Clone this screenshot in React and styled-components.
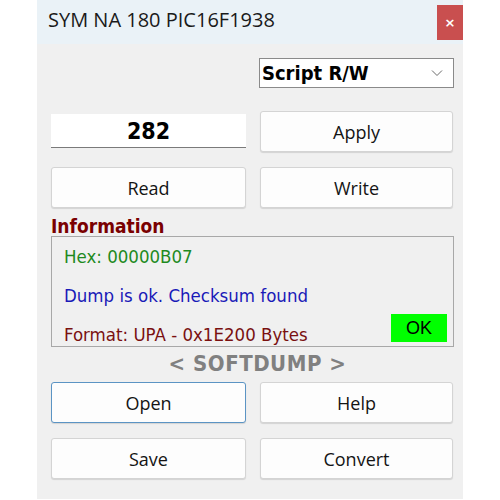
import React from "react";
import styled, { createGlobalStyle } from "styled-components";

const GlobalStyle = createGlobalStyle`
  html, body {
    margin: 0;
    padding: 0;
    background: #ffffff;
  }
  * {
    box-sizing: border-box;
  }
`;

const Window = styled.div`
  margin-left: 37px;
  width: 426px;
  height: 499px;
  display: flex;
  flex-direction: column;
  background: #f0f0f0;
`;

const TitleBar = styled.div`
  height: 44px;
  display: flex;
  align-items: flex-start;
  justify-content: space-between;
  background: #eaf2f7;
`;

const Title = styled.span`
  font-family: "Open Sans", "Noto Sans", sans-serif;
  font-size: 20px;
  color: #1a1a1a;
  padding-left: 11px;
  line-height: 40px;
`;

const CloseButton = styled.div`
  width: 26px;
  height: 35px;
  margin-top: 5px;
  background: #c94f4f;
  color: #ffffff;
  display: flex;
  align-items: center;
  justify-content: center;
  font-family: "DejaVu Sans", sans-serif;
  font-size: 13px;
  font-weight: bold;
`;

const Body = styled.div`
  flex: 1;
  padding: 14px 9px 0 14px;
  display: flex;
  flex-direction: column;
`;

const SelectRow = styled.div`
  display: flex;
  justify-content: flex-end;
`;

const Select = styled.div`
  width: 195px;
  height: 30px;
  border: 1px solid #8a8a8a;
  background: #ffffff;
  display: flex;
  align-items: center;
  justify-content: space-between;
  padding: 0 10px 0 2px;
  font-family: "DejaVu Sans Condensed", "DejaVu Sans", sans-serif;
  font-weight: bold;
  font-size: 20px;
  color: #000;
`;

const Grid = styled.div`
  display: grid;
  grid-template-columns: 195px 193px;
  column-gap: 14px;
  row-gap: 15px;
  margin-top: ${({ $top }) => $top}px;
`;

const Button = styled.div`
  height: 41px;
  display: flex;
  align-items: center;
  justify-content: center;
  background: #fdfdfd;
  border: 1px solid ${({ $focused }) => ($focused ? "#5b94c4" : "#d4d4d4")};
  border-radius: 3px;
  box-shadow: 0 1px 1px rgba(0, 0, 0, 0.12);
  font-family: "Open Sans", "Noto Sans", sans-serif;
  font-size: 18px;
  color: #141414;
`;

const NumberField = styled.div`
  height: 34px;
  margin-top: 3px;
  background: #ffffff;
  border-bottom: 1px solid #7a7a7a;
  display: flex;
  align-items: center;
  justify-content: center;
  font-family: "DejaVu Sans Condensed", "DejaVu Sans", sans-serif;
  font-weight: bold;
  font-size: 23px;
  color: #000;
`;

const InfoLabel = styled.div`
  margin-top: 9px;
  font-family: "DejaVu Sans Condensed", "DejaVu Sans", sans-serif;
  font-weight: bold;
  font-size: 19px;
  line-height: 19px;
  color: #7a0000;
`;

const InfoBox = styled.div`
  height: 111px;
  border: 1px solid #a8a8a8;
  padding: 0 6px 0 12px;
  display: flex;
  flex-direction: column;
`;

const InfoLine = styled.div`
  height: 39px;
  flex-shrink: 0;
  display: flex;
  align-items: center;
  justify-content: space-between;
  font-family: "DejaVu Sans Condensed", "DejaVu Sans", sans-serif;
  font-size: 18.5px;
  color: ${({ $color }) => $color};
`;

const OkBadge = styled.div`
  align-self: flex-start;
  margin-top: -1px;
  width: 56px;
  height: 28px;
  background: #00ff00;
  display: flex;
  align-items: center;
  justify-content: center;
  font-family: "Liberation Sans", sans-serif;
  font-size: 18px;
  color: #000;
`;

const Brand = styled.div`
  height: 33px;
  padding-left: 10px;
  display: flex;
  align-items: center;
  justify-content: center;
  font-family: "DejaVu Sans Condensed", "DejaVu Sans", sans-serif;
  font-weight: bold;
  font-size: 22px;
  color: #808080;
  letter-spacing: 0.5px;
`;

const Chevron = () => (
  <svg width="12" height="8" viewBox="0 0 12 8">
    <path d="M1 1.5 L6 6.5 L11 1.5" fill="none" stroke="#6a6a6a" strokeWidth="1" />
  </svg>
);

export default function App() {
  return (
    <>
      <GlobalStyle />
      <Window>
        <TitleBar>
          <Title>SYM NA 180 PIC16F1938</Title>
          <CloseButton>×</CloseButton>
        </TitleBar>
        <Body>
          <SelectRow>
            <Select>
              <span>Script R/W</span>
              <Chevron />
            </Select>
          </SelectRow>
          <Grid $top={23}>
            <NumberField>282</NumberField>
            <Button>Apply</Button>
            <Button>Read</Button>
            <Button>Write</Button>
          </Grid>
          <InfoLabel>Information</InfoLabel>
          <InfoBox>
            <InfoLine $color="#1e8a1e">Hex: 00000B07</InfoLine>
            <InfoLine $color="#1a1ab8">Dump is ok. Checksum found</InfoLine>
            <InfoLine $color="#7a1010">
              <span>Format: UPA - 0x1E200 Bytes</span>
              <OkBadge>OK</OkBadge>
            </InfoLine>
          </InfoBox>
          <Brand>&lt; SOFTDUMP &gt;</Brand>
          <Grid $top={2}>
            <Button $focused>Open</Button>
            <Button>Help</Button>
            <Button>Save</Button>
            <Button>Convert</Button>
          </Grid>
        </Body>
      </Window>
    </>
  );
}
